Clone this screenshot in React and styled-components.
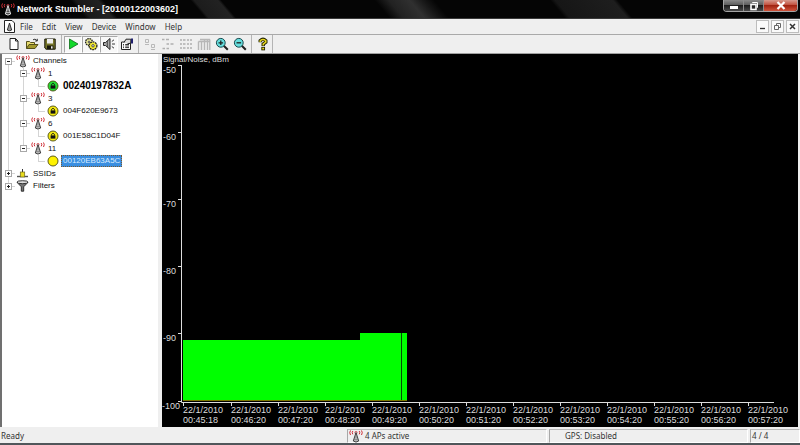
import React from "react";
import styled, { createGlobalStyle, css } from "styled-components";

const ui = '"Noto Sans", sans-serif';
const classic = '"Liberation Sans", Arial, sans-serif';

const GlobalStyle = createGlobalStyle`
  * { box-sizing: border-box; }
  body { margin: 0; background: #eeeeee; }
  button { font: inherit; color: inherit; }
  svg { display: block; }
`;

const Window = styled.div`
  display: flex;
  flex-direction: column;
  min-height: 100vh;
  background: #efefef;
  border-bottom: 2px solid #50565a;
  font: 8px/12px ${ui};
  color: #333333;
`;

const TitleBar = styled.header`
  display: flex;
  align-items: flex-start;
  height: 19px;
  padding: 0 2px 0 1px;
  border-bottom: 1px solid #3a3a3a;
  background:
    linear-gradient(50deg, transparent 34%, #222222 42%, #303030 54%, #161616 62%, transparent 68%) 330px 0 / 160px 100% no-repeat,
    linear-gradient(50deg, transparent 30%, #1c1c1c 34%, #222222 62%, transparent 66%) 180px 0 / 70px 100% no-repeat,
    linear-gradient(50deg, transparent 20%, #161616 24%, #1e1e1e 70%, transparent 74%) 540px 0 / 110px 100% no-repeat,
    linear-gradient(50deg, transparent 30%, #191919 36%, #222222 62%, transparent 68%) 60px 0 / 70px 100% no-repeat,
    #050505;
`;

const Title = styled.h1`
  flex: 1;
  display: flex;
  align-items: center;
  gap: 2px;
  height: 18px;
  margin: 0;
  font: bold 9px/18px ${classic};
  color: #ffffff;
`;

const CaptionGroup = styled.div`
  display: flex;
  height: 12px;
  overflow: hidden;
  border: 1px solid #a5a5a5;
  border-top: 0;
  border-radius: 0 0 4px 4px;
`;

const CaptionButton = styled.button`
  display: flex;
  align-items: center;
  justify-content: center;
  width: ${(p) => (p.$close ? 33 : 20)}px;
  padding: 0;
  border: 0;
  border-right: ${(p) => (p.$close ? "0" : "1px solid #8c8c8c")};
  background: ${(p) =>
    p.$close
      ? "linear-gradient(#d79a8e, #c2503d 45%, #a02412 50%, #d0543c)"
      : "linear-gradient(#8a8a8a, #5c5c5c 45%, #1d1d1d 50%, #4a4a4a)"};
`;

const MenuBar = styled.nav`
  display: flex;
  align-items: center;
  height: 16px;
  padding: 0 1px 0 4px;
  border-bottom: 1px solid #a9a9a9;
`;

const MenuItem = styled.button`
  padding: 0 4px 0 5px;
  border: 0;
  background: none;
`;

const MenuItems = styled.div`
  display: flex;
  flex: 1;
`;

const ChildControls = styled.div`
  display: flex;
  gap: 2px;
`;

const ChildButton = styled.button`
  display: flex;
  align-items: center;
  justify-content: center;
  width: 13px;
  height: 13px;
  padding: 0;
  border: 1px solid #bdbdbd;
  background: #fafafa;
`;

const ToolBar = styled.div`
  display: flex;
  align-items: stretch;
  height: 19px;
  padding-left: 4px;
  border-bottom: 1px solid #a0a0a0;
`;

const ToolGroup = styled.div`
  display: flex;
  align-items: center;
  padding: 0 2px 0 0;
  margin-right: 2px;
  border-right: 1px solid #b4b4b4;
  &:first-child { padding-left: 1px; }
  &:last-child { padding-right: 0; }
`;

const ToolButton = styled.button`
  display: flex;
  align-items: center;
  justify-content: center;
  width: 18px;
  height: 17px;
  padding: 0;
  border: 1px solid transparent;
  background: none;
  ${(p) =>
    p.$pressed &&
    css`
      border-color: #a8a8a8 #ffffff #ffffff #a8a8a8;
      background: #f8f8f8;
    `}
`;

const Main = styled.main`
  flex: 1;
  display: grid;
  grid-template-columns: 158px minmax(0, 1fr);
  column-gap: 4px;
  padding-right: 2px;
  background: #efefef;
`;

const TreePane = styled.ul`
  margin: 0;
  padding: 1px 0 0;
  list-style: none;
  background: #ffffff;
  box-shadow: inset 2px 0 #707070;
  font: 8px/12px ${classic};
  color: #111111;
`;

const TreeRow = styled.li`
  display: flex;
  align-items: center;
  height: 12px;
  &:nth-child(even) { height: 13px; }
`;

const line = "linear-gradient(#d4d4d4, #d4d4d4)";
const guides = {
  none: "none",
  through: `${line} 8px 0 / 1px 100% no-repeat`,
  first: `${line} 8px 100% / 1px 50% no-repeat, ${line} 8px 6px / 7px 1px no-repeat`,
  middle: `${line} 8px 0 / 1px 100% no-repeat, ${line} 8px 6px / 7px 1px no-repeat`,
  last: `${line} 8px 0 / 1px 50% no-repeat, ${line} 8px 6px / 7px 1px no-repeat`,
};

const Cell = styled.span`
  display: flex;
  align-items: center;
  justify-content: center;
  align-self: stretch;
  flex: none;
  width: 15px;
  background: ${(p) => guides[p.$guide || "none"]};
`;

const Expander = styled.button`
  width: 7px;
  height: 7px;
  margin-left: 2px;
  padding: 0;
  border: 1px solid #a8a8a8;
  background:
    linear-gradient(#222222, #222222) center / 3px 1px no-repeat,
    ${(p) => (p.$open ? "" : "linear-gradient(#222222, #222222) center / 1px 3px no-repeat,")}
    #ffffff;
`;

const NodeLabel = styled.span`
  margin-left: 1px;
  padding: 0 2px;
  white-space: nowrap;
  ${(p) => p.$active && css`font-size: 10px; font-weight: bold; color: #000000;`}
  ${(p) =>
    p.$selected &&
    css`
      background: #3a8ee0;
      color: #d8ecff;
      outline: 1px dotted #7a5a30;
      outline-offset: -1px;
    `}
`;

const ChartPane = styled.section`
  background: #000000;
`;

const Chart = styled.svg`
  width: 100%;
  height: auto;
  font: 9px ${classic};
  fill: #dddddd;
`;

const ChartTitle = styled.text`
  font-size: 8px;
`;

const StatusBar = styled.footer`
  display: grid;
  grid-template-columns: minmax(0, 1fr) 200px 199px 50px;
  grid-template-rows: 14px;
  column-gap: 2px;
  height: 16px;
  padding-top: 2px;
`;

const StatusPane = styled.div`
  display: flex;
  align-items: center;
  gap: 2px;
  padding-left: ${(p) => (p.$wide ? 15 : 1)}px;
  border: solid;
  border-width: ${(p) => (p.$plain ? "0" : "1px")};
  border-color: #bababa #ffffff #ffffff #a8a8a8;
  font-size: 8px;
  line-height: 12px;
`;

function Antenna({ light }) {
  const mast = light ? "#eeeeee" : "#333333";
  return (
    <svg width="14" height="13" viewBox="0 0 14 13" fill="none" aria-hidden="true">
      <path d="M1.5 0.5Q0 2.5 1.5 5M3.8 1Q2.6 2.6 3.8 4.3M12.5 0.5Q14 2.5 12.5 5M10.2 1Q11.4 2.6 10.2 4.3" stroke="#cf3038" strokeWidth="1" />
      <circle cx="7" cy="2.6" r="1.2" stroke="#cf3038" strokeWidth=".7" />
      <path d="M7 2.5L4.3 11Q7 13.2 9.7 11Z" fill={light ? "#555555" : "#b5b5b5"} stroke={mast} strokeWidth=".9" />
      <path d="M5.8 7H8.2M5 9.5H9" stroke={light ? mast : "#777777"} strokeWidth=".6" />
    </svg>
  );
}

function AccessPoint({ color, locked }) {
  return (
    <svg width="12" height="12" viewBox="0 0 12 12" aria-hidden="true">
      <circle cx="6" cy="6" r="5" fill={color} stroke="#4c4c10" strokeWidth=".9" />
      {locked && (
        <>
          <rect x="3.6" y="5.4" width="4.8" height="3.2" fill="#111111" />
          <path d="M4.5 5.5V4.4Q6 2.2 7.5 4.4V5.5" fill="none" stroke="#111111" strokeWidth=".9" />
        </>
      )}
    </svg>
  );
}

function Ssid() {
  return (
    <svg width="13" height="10" viewBox="0 0 13 10" aria-hidden="true">
      <path d="M1 7.5H12" stroke="#555555" strokeWidth="1.4" />
      <path d="M6.5 0V3" stroke="#333333" />
      <rect x="4.3" y="3" width="4.4" height="5" fill="#e9dc1d" stroke="#6b6420" strokeWidth=".7" />
    </svg>
  );
}

function Filter() {
  return (
    <svg width="13" height="12" viewBox="0 0 13 12" aria-hidden="true">
      <path d="M1 2.3L5.3 6.8V11.2H7.7V6.8L12 2.3Z" fill="#777777" stroke="#222222" strokeWidth=".9" />
      <ellipse cx="6.5" cy="2.2" rx="5.5" ry="1.5" fill="#dddddd" stroke="#222222" strokeWidth=".9" />
    </svg>
  );
}

const nodeIcons = {
  antenna: <Antenna />,
  green: <AccessPoint color="#22dd33" locked />,
  yellow: <AccessPoint color="#f4ea12" locked />,
  open: <AccessPoint color="#fff200" />,
  ssid: <Ssid />,
  filter: <Filter />,
};

const nodes = [
  { label: "Channels", icon: "antenna", cells: ["first"], open: true },
  { label: "1", icon: "antenna", cells: ["through", "middle"], open: true },
  { label: "00240197832A", icon: "green", cells: ["through", "through", "last"], active: true },
  { label: "3", icon: "antenna", cells: ["through", "middle"], open: true },
  { label: "004F620E9673", icon: "yellow", cells: ["through", "through", "last"] },
  { label: "6", icon: "antenna", cells: ["through", "middle"], open: true },
  { label: "001E58C1D04F", icon: "yellow", cells: ["through", "through", "last"] },
  { label: "11", icon: "antenna", cells: ["through", "last"], open: true },
  { label: "00120EB63A5C", icon: "open", cells: ["through", "none", "last"], selected: true },
  { label: "SSIDs", icon: "ssid", cells: ["middle"], open: false },
  { label: "Filters", icon: "filter", cells: ["last"], open: false },
];

function Node({ node }) {
  return (
    <TreeRow>
      {node.cells.map((guide, i) => (
        <Cell key={i} $guide={guide}>
          {node.open !== undefined && i === node.cells.length - 1 && (
            <Expander
              $open={node.open}
              aria-expanded={node.open}
              aria-label={`Toggle ${node.label}`}
            />
          )}
        </Cell>
      ))}
      <Cell>{nodeIcons[node.icon]}</Cell>
      <NodeLabel $active={node.active} $selected={node.selected}>{node.label}</NodeLabel>
    </TreeRow>
  );
}

const Glyph = ({ children }) => (
  <svg width="14" height="14" viewBox="0 0 14 14" fill="none" stroke="#222222" aria-hidden="true">
    {children}
  </svg>
);

const lens = (
  <>
    <path d="M8.5 8.5L12.8 12.8" strokeWidth="2" />
    <circle cx="5.8" cy="5.8" r="4.4" fill="#66dede" stroke="#16484c" />
  </>
);

const toolGroups = [
  [
    { name: "New", icon: <path d="M3 1.5H8.5L11 4V12.5H3ZM8.5 1.5V4H11" fill="#ffffff" /> },
    {
      name: "Open",
      icon: (
        <>
          <path d="M1.5 11.5V4.5H4.5L5.5 5.5H9.5V7.5" fill="#e8dc70" stroke="#55501c" />
          <path d="M1.5 11.5L4 7.5H13L10 11.5Z" fill="#a39a2c" stroke="#55501c" />
          <path d="M8 2.8Q10 1 12 3.6M12.3 1.8V4H10.2" strokeWidth=".9" />
        </>
      ),
    },
    {
      name: "Save",
      icon: (
        <>
          <path d="M1.8 2H12.2V12.2H3L1.8 11Z" fill="#77762a" stroke="#171708" />
          <rect x="4" y="2" width="6" height="4.5" fill="#eeeeee" stroke="none" />
          <rect x="4" y="8.5" width="6.5" height="3.7" fill="#171708" stroke="none" />
          <rect x="8" y="9.3" width="1.6" height="2.3" fill="#eeeeee" stroke="none" />
        </>
      ),
    },
  ],
  [
    { name: "Enable scan", pressed: true, icon: <path d="M3.5 2L12 7L3.5 12Z" fill="#12d82a" stroke="#0b6a16" strokeWidth=".8" /> },
    {
      name: "Auto reconfigure",
      pressed: true,
      icon: (
        <>
          <circle cx="5" cy="5" r="3.4" fill="#eeee99" strokeDasharray="1.6 .7" strokeWidth="1.3" />
          <circle cx="9" cy="8.8" r="3.9" fill="#f3ea33" strokeDasharray="1.8 .7" strokeWidth="1.3" />
          <circle cx="5" cy="5" r=".9" fill="#ffffff" strokeWidth=".8" />
          <circle cx="9" cy="8.8" r="1.2" fill="#ffffff" strokeWidth=".8" />
        </>
      ),
    },
    {
      name: "Sound",
      pressed: true,
      icon: (
        <>
          <path d="M1.5 5.5H3.5L8 1.5V12.5L3.5 8.5H1.5Z" fill="#aaaaaa" />
          <path d="M5.3 4V10" stroke="#444444" />
          <path d="M9.8 4.5L12 2.8M10 7H13M9.8 9.5L12 11.2" strokeWidth=".9" />
        </>
      ),
    },
    {
      name: "Options",
      icon: (
        <>
          <path d="M1.5 5H10.5V12.5H1.5Z" fill="#ffffff" />
          <path d="M3 7.5H4M5.2 7.5H9M3 9H4M5.2 9H9M3 10.6H4M5.2 10.6H9" strokeWidth=".9" />
          <path d="M4 5.5L6 2.2H10.8V6.2L7.5 6.8" fill="#dddddd" />
          <path d="M12 1.5V6.5" stroke="#20206e" strokeWidth="2" />
        </>
      ),
    },
  ],
  [
    { name: "Large icons", icon: <path d="M2.5 2.5H5.5V5.5H2.5ZM2 7.5H6M8.5 7.5H11.5V10.5H8.5ZM8 12.5H12" stroke="#b9b9b9" /> },
    { name: "Small icons", icon: <path d="M1 2.5H3.5M5 2.5H8M5.5 7H8M9.5 7H12.5M1.5 11.5H4M5.5 11.5H8" stroke="#b0b0b0" strokeWidth="1.5" /> },
    { name: "List", icon: <path d="M1 3H3M4 3H6.5M8 3H10M11 3H13M1 7H3M4 7H6.5M8 7H10M11 7H13M1 11H3M4 11H6.5M8 11H10M11 11H13" stroke="#b0b0b0" strokeWidth="1.5" /> },
    { name: "Details", icon: <path d="M3 2.5H13M1.5 4.5V13M4.5 4.5V13M7.5 2.5V13M10.5 2.5V13M12.8 2.5V13M1.5 4.5H13" stroke="#b7b7b7" strokeWidth="1.4" /> },
    { name: "Zoom in", icon: <>{lens}<path d="M3.5 5.8H8.1M5.8 3.5V8.1" strokeWidth="1.3" /></> },
    { name: "Zoom out", icon: <>{lens}<path d="M3.5 5.8H8.1" strokeWidth="1.3" /></> },
  ],
  [
    {
      name: "Help",
      icon: (
        <>
          <path d="M4.2 5.2V3.6Q7 .9 9.8 3.6V5.2L7.2 7.2V9" stroke="#222200" strokeWidth="3.4" />
          <path d="M4.2 5V3.8Q7 1.3 9.8 3.8V5.2L7.2 7.2V8.6" stroke="#e8d820" strokeWidth="1.5" />
          <rect x="5.8" y="10.3" width="2.8" height="2.6" fill="#e8d820" stroke="#222200" strokeWidth=".9" />
        </>
      ),
    },
  ],
];

const levels = [-50, -60, -70, -80, -90, -100];
const times = [
  "00:45:18", "00:46:20", "00:47:20", "00:48:20", "00:49:20", "00:50:20", "00:51:20",
  "00:52:20", "00:53:20", "00:54:20", "00:55:20", "00:56:20", "00:57:20",
];

function SignalChart() {
  return (
    <Chart viewBox="0 0 636 373" role="img" aria-label="Signal and noise over time">
      <path d="M21 286H198V279H245V346H21Z" fill="#00ff00" />
      <path d="M239.5 279V346" stroke="#064a06" />
      <path d="M21 346.5H245" stroke="#7a7a00" />
      <path d="M19.5 11V348.5H612" fill="none" stroke="#dddddd" />
      <ChartTitle x="1" y="8">Signal/Noise, dBm</ChartTitle>
      {levels.map((level, i) => {
        const y = 11 + Math.round(i * 67.1);
        return (
          <g key={level}>
            <path d={`M16 ${y + 0.5}H20`} stroke="#dddddd" />
            <text x={level === -100 ? 0 : 1} y={y + 8}>{level}</text>
          </g>
        );
      })}
      {times.map((time, i) => {
        const x = i === 0 ? 21 : 22 + Math.round(i * 47);
        return (
          <g key={time}>
            <path d={`M${x + 0.5} 348V352`} stroke="#dddddd" />
            <text x={x} y="359">22/1/2010</text>
            <text x={x} y="369">{time}</text>
          </g>
        );
      })}
    </Chart>
  );
}

export default function App() {
  return (
    <Window>
      <GlobalStyle />
      <TitleBar>
        <Title><Antenna light />Network Stumbler - [20100122003602]</Title>
        <CaptionGroup>
          <CaptionButton aria-label="Minimize">
            <svg width="10" height="8"><rect x="1" y="4" width="8" height="3" fill="#ffffff" /></svg>
          </CaptionButton>
          <CaptionButton aria-label="Restore">
            <svg width="10" height="10" fill="none" stroke="#ffffff">
              <path d="M3.5 2V1.5H8.5V6.5H8" />
              <rect x="2" y="3.5" width="5" height="5" strokeWidth="1.6" />
            </svg>
          </CaptionButton>
          <CaptionButton $close aria-label="Close">
            <svg width="10" height="9"><path d="M1.5 1L8.5 8M8.5 1L1.5 8" stroke="#ffffff" strokeWidth="2.2" /></svg>
          </CaptionButton>
        </CaptionGroup>
      </TitleBar>
      <MenuBar>
        <svg width="11" height="13" viewBox="0 0 11 13" fill="none" stroke="#222222" aria-hidden="true">
          <path d="M.5 .5H8L10.5 3V12.5H.5Z" fill="#ffffff" />
          <path d="M5.5 3L3.3 10Q5.5 11.5 7.7 10Z" fill="#999999" strokeWidth=".9" />
        </svg>
        <MenuItems>
          {["File", "Edit", "View", "Device", "Window", "Help"].map((m) => <MenuItem key={m}>{m}</MenuItem>)}
        </MenuItems>
        <ChildControls>
          <ChildButton aria-label="Minimize document">
            <svg width="7" height="7"><path d="M1 5.5H6" stroke="#333333" strokeWidth="1.3" /></svg>
          </ChildButton>
          <ChildButton aria-label="Restore document">
            <svg width="7" height="7" fill="none" stroke="#666666"><path d="M2.5 2V.5H6.5V4.5H5M.5 2.5H4.5V6.5H.5Z" /></svg>
          </ChildButton>
          <ChildButton aria-label="Close document">
            <svg width="7" height="7"><path d="M1 1L6 6M6 1L1 6" stroke="#333333" strokeWidth="1.5" /></svg>
          </ChildButton>
        </ChildControls>
      </MenuBar>
      <ToolBar role="toolbar">
        {toolGroups.map((group, i) => (
          <ToolGroup key={i}>
            {group.map((tool) => (
              <ToolButton key={tool.name} aria-label={tool.name} $pressed={tool.pressed}>
                <Glyph>{tool.icon}</Glyph>
              </ToolButton>
            ))}
          </ToolGroup>
        ))}
      </ToolBar>
      <Main>
        <TreePane>{nodes.map((node) => <Node key={node.label} node={node} />)}</TreePane>
        <ChartPane><SignalChart /></ChartPane>
      </Main>
      <StatusBar>
        <StatusPane $plain>Ready</StatusPane>
        <StatusPane><Antenna />4 APs active</StatusPane>
        <StatusPane $wide>GPS: Disabled</StatusPane>
        <StatusPane>4 / 4</StatusPane>
      </StatusBar>
    </Window>
  );
}
